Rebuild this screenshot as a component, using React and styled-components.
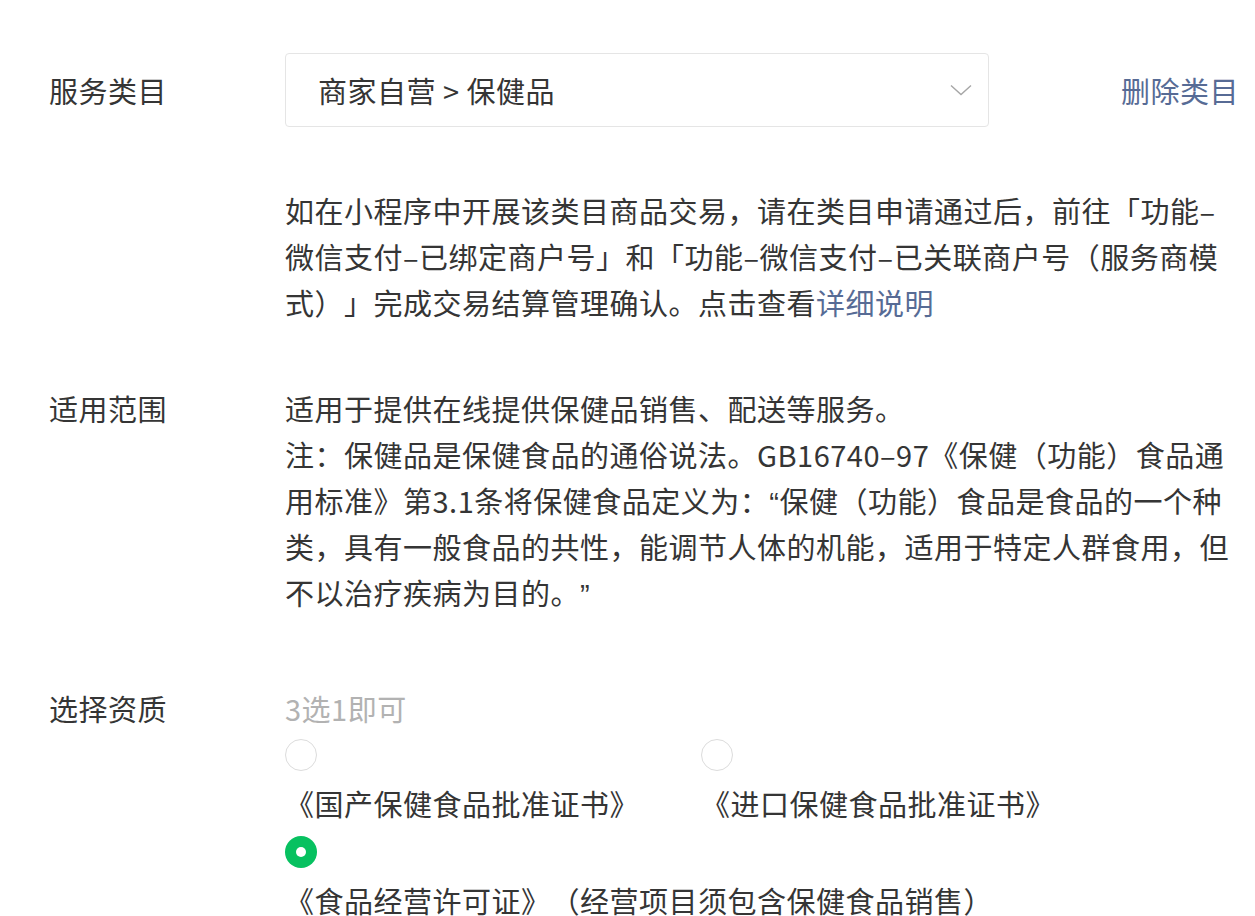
import React from "react";
import styled, { createGlobalStyle } from "styled-components";

const Global = createGlobalStyle`
  html, body { margin: 0; padding: 0; background: #fff; }
  body {
    font-family: "Noto Sans CJK SC", "Noto Sans", sans-serif;
    color: #353535;
    -webkit-font-smoothing: antialiased;
    text-spacing-trim: space-all;
  }
`;

const Page = styled.div`
  padding: 53px 15px 0 49px;
  width: 1255px;
  box-sizing: border-box;
  font-size: 29px;
  letter-spacing: 0.5px;
  line-height: 46px;
`;

const Row = styled.div`
  display: grid;
  grid-template-columns: 236px 1fr;
  margin-bottom: ${(p) => p.$gap || 0}px;
`;

const Label = styled.div`
  color: #353535;
  padding-top: ${(p) => p.$top || 0}px;
`;

const Content = styled.div`
  min-width: 0;
`;

const SelectLine = styled.div`
  display: flex;
  align-items: center;
  justify-content: space-between;
  padding-right: 1px;
`;

const Select = styled.div`
  width: 704px;
  height: 74px;
  box-sizing: border-box;
  border: 1px solid #e5e5e5;
  border-radius: 4px;
  display: flex;
  align-items: center;
  justify-content: space-between;
  padding: 0 16px 0 32px;
`;

const Link = styled.a`
  color: #576b95;
  text-decoration: none;
  cursor: pointer;
`;

const Para = styled.p`
  margin: 0;
  color: #353535;
`;

const Quote = styled.span`
  font-family: "Liberation Sans", sans-serif;
  line-height: 1;
`;

const Hint = styled.div`
  color: #b2b2b2;
`;

const Options = styled.div`
  display: flex;
  flex-wrap: wrap;
  column-gap: 62px;
  row-gap: 2px;
`;

const Option = styled.label`
  display: flex;
  flex-direction: column;
  align-items: flex-start;
  cursor: pointer;
`;

const Radio = styled.span`
  width: 32px;
  height: 32px;
  box-sizing: border-box;
  border-radius: 50%;
  margin: 8px 0 9px;
  border: ${(p) => (p.$checked ? "none" : "1px solid #dcdcdc")};
  background: ${(p) => (p.$checked ? "#07c160" : "#fff")};
  display: flex;
  align-items: center;
  justify-content: center;
  &::after {
    content: "";
    display: ${(p) => (p.$checked ? "block" : "none")};
    width: 10px;
    height: 10px;
    border-radius: 50%;
    background: #fff;
  }
`;

const Chevron = () => (
  <svg width="22" height="12" viewBox="0 0 22 12" fill="none">
    <path d="M1 1.5 L11 10.5 L21 1.5" stroke="#a6a6a6" strokeWidth="1.4" />
  </svg>
);

export default function App() {
  return (
    <>
      <Global />
      <Page>
        <Row $gap={60}>
          <Label $top={14}>服务类目</Label>
          <Content>
            <SelectLine>
              <Select>
                <span>商家自营 &gt; 保健品</span>
                <Chevron />
              </Select>
              <Link>删除类目</Link>
            </SelectLine>
          </Content>
        </Row>
        <Row $gap={60}>
          <div />
          <Content>
            <Para>
              如在小程序中开展该类目商品交易，请在类目申请通过后，前往「功能–微信支付–已绑定商户号」和「功能–微信支付–已关联商户号（服务商模式）」完成交易结算管理确认。点击查看
              <Link>详细说明</Link>
            </Para>
          </Content>
        </Row>
        <Row $gap={70}>
          <Label>适用范围</Label>
          <Content>
            <Para>适用于提供在线提供保健品销售、配送等服务。</Para>
            <Para>
              注：保健品是保健食品的通俗说法。GB16740–97《保健（功能）食品通用标准》第3.1条将保健食品定义为：<Quote>“</Quote>保健（功能）食品是食品的一个种类，具有一般食品的共性，能调节人体的机能，适用于特定人群食用，但不以治疗疾病为目的。<Quote>”</Quote>
            </Para>
          </Content>
        </Row>
        <Row>
          <Label>选择资质</Label>
          <Content>
            <Hint>3选1即可</Hint>
            <Options>
              <Option>
                <Radio />
                <span>《国产保健食品批准证书》</span>
              </Option>
              <Option>
                <Radio />
                <span>《进口保健食品批准证书》</span>
              </Option>
              <Option>
                <Radio $checked />
                <span>《食品经营许可证》（经营项目须包含保健食品销售）</span>
              </Option>
            </Options>
          </Content>
        </Row>
      </Page>
    </>
  );
}
